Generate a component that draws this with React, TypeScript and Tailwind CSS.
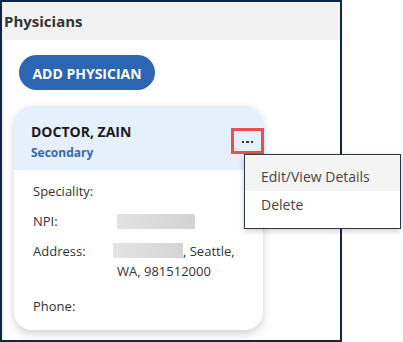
const font = { fontFamily: '"Open Sans", "Noto Sans", sans-serif' }

function Row({ label, children }: { label: string; children?: React.ReactNode }) {
  return (
    <div className="flex text-[13px] leading-[20px] text-[#333]">
      <span className="w-[84px] shrink-0">{label}</span>
      <div className="flex-1">{children}</div>
    </div>
  )
}

export default function App() {
  return (
    <div className="relative h-[342px] w-[403px] bg-white" style={font}>
      <div className="flex h-[342px] w-[342px] flex-col border-2 border-[#0f2744] bg-[#f2f2f2]">
        <div className="flex h-[38px] items-center px-[2px] text-[15px] font-bold text-[#333]">Physicians</div>
        <div className="ml-[2px] flex-1 bg-white pl-[15px] pr-[75px] pt-[15px]">
          <button className="h-[35px] w-[136px] rounded-full bg-[#2c65b1] pt-[1px] text-[14px] font-bold text-white">
            ADD PHYSICIAN
          </button>
          <div className="ml-[-5px] mt-[16px] h-[224px] w-[249px] overflow-hidden rounded-[18px] bg-white shadow-[0_4px_10px_rgba(0,0,0,0.18)]">
            <div className="flex h-[64px] items-start justify-between bg-[#e6f0fd] pl-[17px] pr-0 pt-[16px]">
              <div>
                <p className="text-[14px] font-bold leading-[20px] text-[#1b1b1b]">DOCTOR, ZAIN</p>
                <p className="mt-[3px] text-[12px] font-bold leading-[16px] text-[#3568b5]">Secondary</p>
              </div>
            </div>
            <div className="flex flex-col gap-[10px] pl-[19px] pt-[11px]">
              <Row label="Speciality:" />
              <Row label="NPI:">
                <div className="mt-[3px] h-[15px] w-[78px] bg-gradient-to-r from-[#e2e2e2] to-[#d2d2d2]" />
              </Row>
              <Row label="Address:">
                <div className="ml-[-4px]">
                  <span className="inline-block h-[15px] w-[70px] translate-y-[2px] bg-gradient-to-r from-[#e4e4e4] to-[#d4d4d4]" />
                  <span>, Seattle,</span>
                  <div className="ml-[4px]">WA, 981512000</div>
                </div>
              </Row>
              <div className="mt-[5px]">
                <Row label="Phone:" />
              </div>
            </div>
          </div>
        </div>
      </div>

      <div className="absolute left-[231px] top-[128px] flex h-[26px] w-[33px] items-center justify-center gap-[2px] border-[3px] border-[#f24a4f] pt-[2px]">
        <span className="size-[2.5px] bg-[#333]" />
        <span className="size-[2.5px] bg-[#333]" />
        <span className="size-[2.5px] bg-[#333]" />
      </div>

      <div className="absolute left-[244px] top-[154px] h-[75px] w-[157px] border border-[#2e3440] bg-white pt-[1px] text-[14px] leading-[18px] text-[#444] shadow-[0_2px_6px_rgba(0,0,0,0.2)]">
        <div className="h-[35px] bg-[#f4f4f4] pl-[16px] pt-[12px]">Edit/View Details</div>
        <div className="pl-[16px] pt-[5px]">Delete</div>
      </div>
    </div>
  )
}
